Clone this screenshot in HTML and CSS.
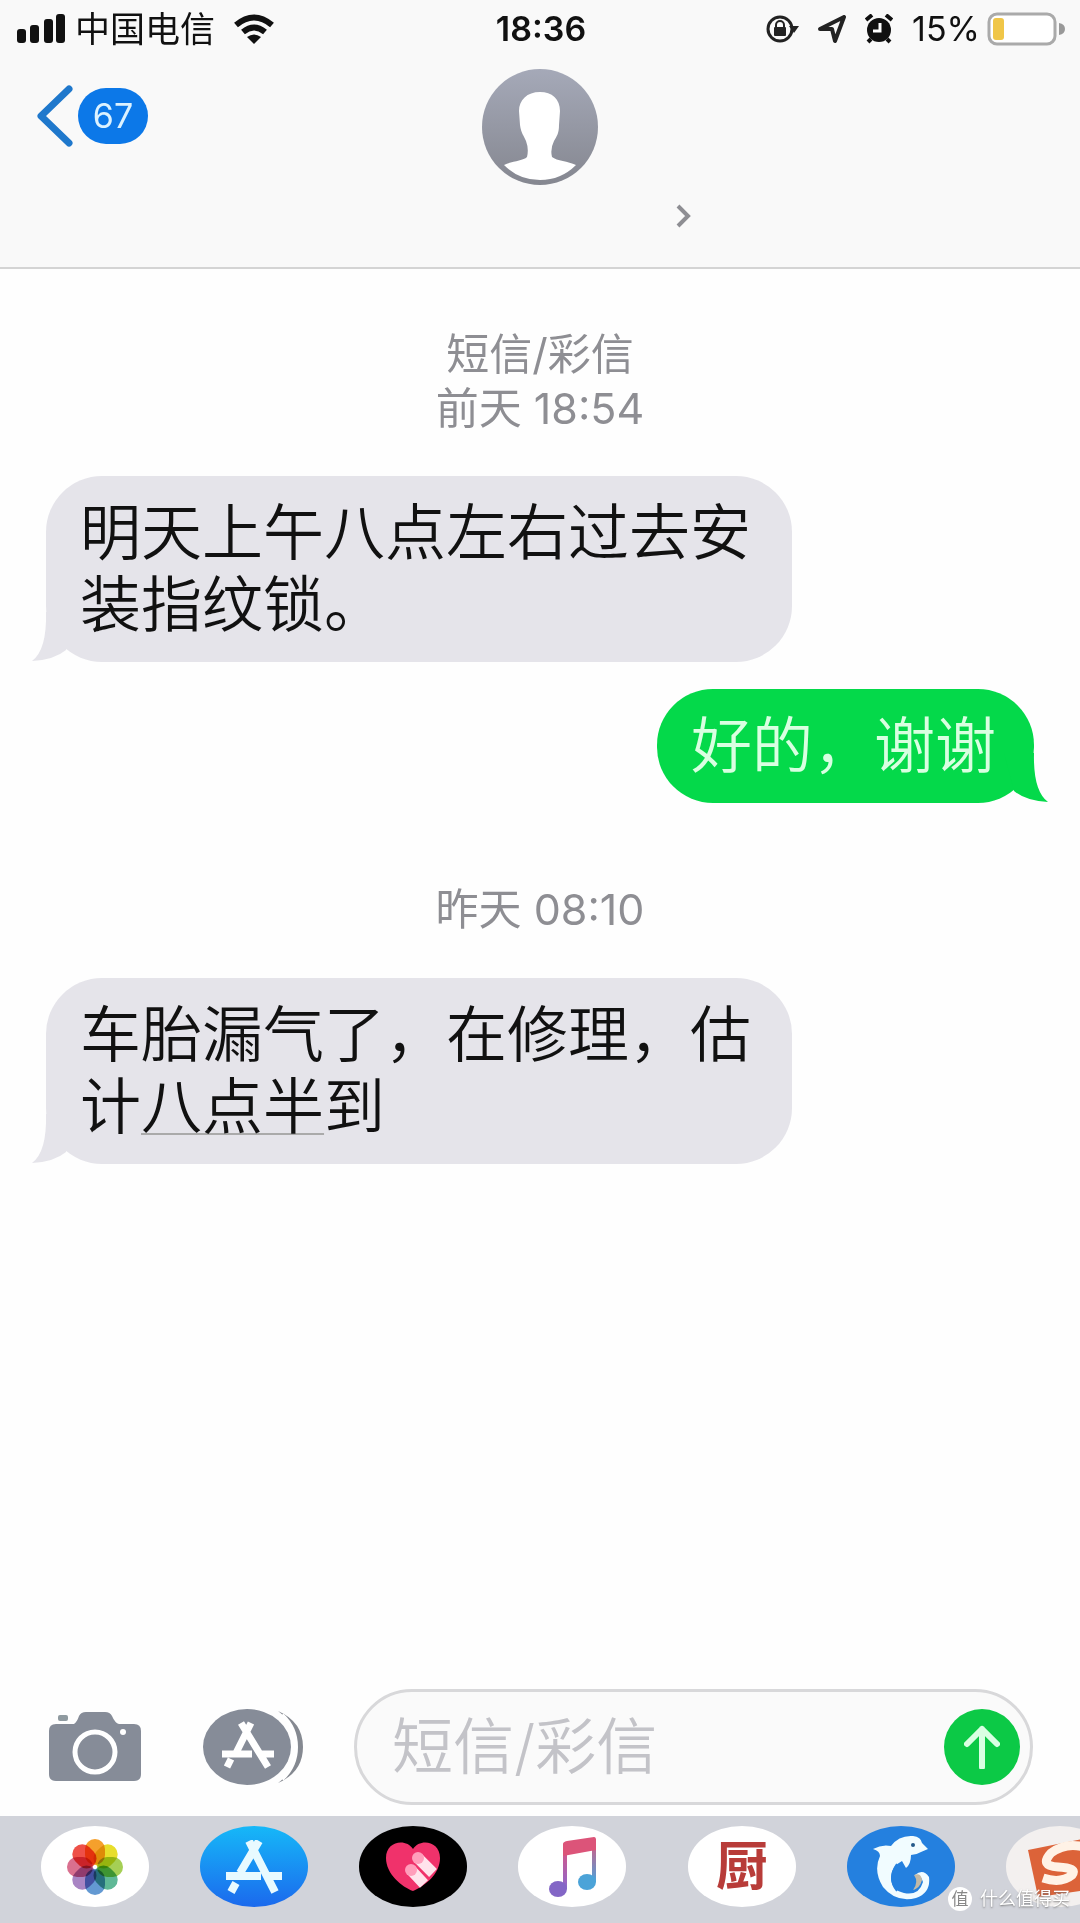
FILE: index.html
```html
<!DOCTYPE html>
<html lang="zh-CN">
<head>
  <meta charset="UTF-8">
  <meta name="viewport" content="width=device-width, initial-scale=1.0">
  <title>短信/彩信</title>
  <link rel="stylesheet" href="styles.css">
</head>
<body>
  <header class="header">
    <div class="status">
      <div class="status-left">
        <svg class="signal" width="50" height="30" viewBox="0 0 50 30">
          <rect x="0" y="15" width="9" height="14" rx="3"/>
          <rect x="13" y="11" width="9" height="18" rx="3"/>
          <rect x="27" y="5" width="9" height="24" rx="3"/>
          <rect x="39" y="0" width="9" height="29" rx="3"/>
        </svg>
        <span class="carrier">中国电信</span>
        <svg class="wifi" width="42" height="30" viewBox="0 0 42 30">
          <path d="M3 11Q21 -4 39 11M10 18Q21 9 32 18" fill="none" stroke="#111" stroke-width="6"/>
          <path d="M14 23Q21 18 28 23L21 30Z" fill="#111"/>
        </svg>
      </div>
      <time class="clock">18:36</time>
      <div class="status-right">
        <svg width="34" height="30" viewBox="0 0 34 30">
          <circle cx="15" cy="15" r="12" fill="none" stroke="#222" stroke-width="3"/>
          <path d="M24 12h10l-5 7z" fill="#222"/>
          <rect x="9" y="13" width="12" height="9" rx="1" fill="#222"/>
          <path d="M11 14v-3a4 4 0 0 1 8 0v3" fill="none" stroke="#222" stroke-width="2"/>
        </svg>
        <svg width="28" height="28" viewBox="0 0 28 28">
          <path d="M2 14L26 2L17 26L14 14Z" fill="none" stroke="#222" stroke-width="4" stroke-linejoin="round"/>
        </svg>
        <svg width="28" height="30" viewBox="0 0 28 30">
          <circle cx="14" cy="16" r="12" fill="#111"/>
          <path d="M1 6L7 1M27 6L21 1M6 25L3 28M22 25L25 28" stroke="#111" stroke-width="4"/>
          <path d="M15 9v8H8" fill="none" stroke="#fff" stroke-width="3"/>
        </svg>
        <span class="percent">15%</span>
        <svg width="78" height="34" viewBox="0 0 78 34">
          <rect x="2" y="2" width="66" height="30" rx="8" fill="#fff" stroke="#aaa" stroke-width="3"/>
          <rect x="6" y="6" width="11" height="22" rx="3" fill="#f0c648"/>
          <path d="M72 11q6 1 6 6t-6 6z" fill="#999"/>
        </svg>
      </div>
    </div>
    <nav class="nav">
      <a class="back" href="#" aria-label="返回">
        <svg width="38" height="62" viewBox="0 0 38 62">
          <path d="M34 4L6 31L34 58" fill="none" stroke="#1f78cc" stroke-width="7" stroke-linecap="round" stroke-linejoin="round"/>
        </svg>
        <span class="unread">67</span>
      </a>
      <a class="contact" href="#" aria-label="联系人">
        <svg class="avatar" width="118" height="118" viewBox="0 0 118 118">
          <defs>
            <linearGradient id="avatar-fill" x1="0" y1="0" x2="0" y2="1">
              <stop offset="0" stop-color="#a5a9b8"/>
              <stop offset="1" stop-color="#858790"/>
            </linearGradient>
          </defs>
          <circle cx="59" cy="59" r="58" fill="url(#avatar-fill)"/>
          <path d="M59 24C46 24 38 32 38 43L39 57C40 65 43 68 45 73Q48 81 46 89C42 93 31 93 23 97Q38 112 59 112T95 97C87 93 76 93 71 89Q69 81 73 73C76 68 78 65 78 57L79 43C79 31 71 24 59 24Z" fill="#fff"/>
        </svg>
        <svg class="detail" width="16" height="24" viewBox="0 0 16 24">
          <path d="M3 2L13 12L3 22" fill="none" stroke="#8e8e93" stroke-width="4"/>
        </svg>
      </a>
    </nav>
  </header>

  <main class="messages">
    <p class="stamp">短信/彩信<br>前天 <time>18:54</time></p>
    <div class="bubble received">
      明天上午八点左右过去安装指纹锁。
      <svg class="tail" width="44" height="50" viewBox="0 0 44 50">
        <path d="M14 0Q15 38 0 49Q22 48 34 38L44 0Z"/>
      </svg>
    </div>
    <div class="bubble sent">
      好的，谢谢
      <svg class="tail" width="44" height="50" viewBox="0 0 44 50">
        <path d="M30 0Q29 38 44 49Q22 48 10 38L0 0Z"/>
      </svg>
    </div>
    <p class="stamp later">昨天 <time>08:10</time></p>
    <div class="bubble received">
      车胎漏气了，在修理，估计<a class="when" href="#">八点半</a>到
      <svg class="tail" width="44" height="50" viewBox="0 0 44 50">
        <path d="M14 0Q15 38 0 49Q22 48 34 38L44 0Z"/>
      </svg>
    </div>
  </main>

  <form class="compose">
    <button class="tool" type="button" aria-label="相机">
      <svg width="94" height="72" viewBox="0 0 94 72">
        <path d="M8 13H26Q29 11 31 5Q33 1 38 1H57Q62 1 64 5Q67 12 71 13H86Q93 13 93 20V63Q93 70 86 70H8Q1 70 1 63V20Q1 13 8 13Z" fill="#868c98"/>
        <rect x="10" y="4" width="10" height="6" rx="2" fill="#8f9aa0"/>
        <circle cx="47" cy="41" r="20" fill="none" stroke="#fff" stroke-width="5"/>
        <circle cx="75" cy="21" r="3" fill="#fff"/>
      </svg>
    </button>
    <button class="tool" type="button" aria-label="应用">
      <svg width="102" height="78" viewBox="0 0 102 78">
        <path d="M76 3Q101 14 101 39T76 75Q94 62 94 39T76 3Z" fill="#858991"/>
        <ellipse cx="45" cy="39" rx="44" ry="38" fill="#868c98"/>
        <path d="M80 7Q94 20 94 39T80 71" fill="none" stroke="#fff" stroke-width="4"/>
        <g fill="none" stroke="#fff" stroke-width="7">
          <path d="M49 15L34 45M39 15L66 59M20 46H50M58 46H72M29 51L25 59"/>
        </g>
      </svg>
    </button>
    <div class="field">
      <input class="text" type="text" placeholder="短信/彩信" aria-label="短信/彩信">
      <button class="send" type="button" aria-label="发送">
        <svg width="36" height="44" viewBox="0 0 36 44">
          <path d="M18 42V4M3 19L18 4L33 19" fill="none" stroke="#d9ffe3" stroke-width="6" stroke-linecap="round" stroke-linejoin="round"/>
        </svg>
      </button>
    </div>
  </form>

  <footer class="apps">
    <button class="app" type="button" aria-label="照片">
      <svg width="58" height="58" viewBox="-29 -29 58 58">
        <g class="petals">
          <rect x="-10" y="-28" width="20" height="26" rx="10" fill="#f5a02c"/>
          <rect x="-10" y="-28" width="20" height="26" rx="10" fill="#e8de2c" transform="rotate(45)"/>
          <rect x="-10" y="-28" width="20" height="26" rx="10" fill="#a5cf55" transform="rotate(90)"/>
          <rect x="-10" y="-28" width="20" height="26" rx="10" fill="#5fb896" transform="rotate(135)"/>
          <rect x="-10" y="-28" width="20" height="26" rx="10" fill="#6399d2" transform="rotate(180)"/>
          <rect x="-10" y="-28" width="20" height="26" rx="10" fill="#a985c4" transform="rotate(225)"/>
          <rect x="-10" y="-28" width="20" height="26" rx="10" fill="#d9708f" transform="rotate(270)"/>
          <rect x="-10" y="-28" width="20" height="26" rx="10" fill="#ee5048" transform="rotate(315)"/>
        </g>
      </svg>
    </button>
    <button class="app store" type="button" aria-label="App Store">
      <svg width="58" height="54" viewBox="0 0 58 54">
        <path d="M34 1L15 33M24 1L50 52M1 36H36M44 36H57M11 43L6 52" fill="none" stroke="#e8faff" stroke-width="8"/>
      </svg>
    </button>
    <button class="app touch" type="button" aria-label="Digital Touch">
      <svg width="58" height="54" viewBox="0 0 58 54">
        <path d="M29 9C22 -2 2 1 2 18C2 34 18 47 29 51C41 46 56 34 56 18C56 1 36 -2 29 9Z" fill="#f0326b"/>
        <path d="M34 18L49 33M27 30L40 44" stroke="#ffe3ec" stroke-width="11"/>
        <circle cx="34" cy="18" r="6" fill="#ff9ebb"/>
        <circle cx="27" cy="30" r="6" fill="#ff9ebb"/>
      </svg>
    </button>
    <button class="app" type="button" aria-label="音乐">
      <svg width="50" height="62" viewBox="0 0 50 62">
        <defs>
          <linearGradient id="stem-left" x1="0" y1="0" x2="0" y2="1">
            <stop offset="0" stop-color="#e2557c"/>
            <stop offset="1" stop-color="#8a68cf"/>
          </linearGradient>
          <linearGradient id="stem-right" x1="0" y1="0" x2="0" y2="1">
            <stop offset="0" stop-color="#e2557c"/>
            <stop offset="1" stop-color="#4ba3db"/>
          </linearGradient>
        </defs>
        <path d="M16 8H20V53H16Z" fill="url(#stem-left)"/>
        <path d="M45 3H49V46H45Z" fill="url(#stem-right)"/>
        <path d="M16 8Q16 6 20 5L47 1Q49 1 49 4V14L16 20Z" fill="#dc5479"/>
        <ellipse cx="11" cy="53" rx="9" ry="8" fill="#8366c6"/>
        <ellipse cx="40" cy="46" rx="9" ry="8" fill="#4ba3d8"/>
      </svg>
    </button>
    <span class="divider"></span>
    <button class="app kitchen" type="button">厨</button>
    <button class="app travel" type="button" aria-label="旅行">
      <svg width="58" height="66" viewBox="0 0 58 66">
        <path d="M1 15Q10 10 19 12Q27 1 41 2Q49 3 50 9L56 15L49 18Q44 21 39 21Q39 30 34 34L30 27Q20 32 19 43Q19 56 32 59Q47 62 51 48Q50 42 43 41Q51 34 57 43Q59 59 44 64Q24 69 11 53Q1 37 8 22Q8 17 1 15Z" fill="#f1fcff"/>
        <path d="M25 30Q15 44 25 57" fill="none" stroke="#2480df" stroke-width="2"/>
        <path d="M42 41Q49 38 50 46Q48 54 41 56Q47 48 42 41Z" fill="#c2b9a6"/>
        <circle cx="41" cy="11" r="2" fill="#24598a"/>
      </svg>
    </button>
    <button class="app sogou" type="button" aria-label="搜狗">
      <svg width="76" height="62" viewBox="0 0 76 62">
        <path d="M1 14L66 1L75 52L11 61Z" fill="#dc6339"/>
        <path d="M60 12Q40 5 24 17Q12 30 31 31Q51 32 45 39Q34 48 16 42" fill="none" stroke="#fff2e6" stroke-width="9"/>
      </svg>
    </button>
    <div class="watermark">
      <span class="seal">值</span>
      <span>什么值得买</span>
    </div>
  </footer>
</body>
</html>
```

FILE: styles.css
```css
* {
  box-sizing: border-box;
}

body {
  margin: 0;
  min-height: 100vh;
  display: flex;
  flex-direction: column;
  background: #fefefe;
  color: #111;
  font-family: Inter, "Noto Sans CJK SC", sans-serif;
  overflow-x: hidden;
}

button {
  border: 0;
  padding: 0;
  background: none;
  font-family: inherit;
}

svg {
  display: block;
  flex: none;
}

/* status bar and contact */
.header {
  background: #f9f9f9;
  border-bottom: 2px solid #d4d4d4;
}

.status {
  display: grid;
  grid-template-columns: 1fr auto 1fr;
  align-items: center;
  height: 58px;
  padding: 0 15px 0 17px;
  line-height: 40px;
}

.status-left,
.status-right {
  display: flex;
  align-items: center;
}

.status-right {
  justify-content: flex-end;
  gap: 19px;
}

.signal {
  fill: #111;
}

.carrier {
  margin: 0 18px 0 8px;
  font-size: 35px;
}

.clock {
  font-size: 34px;
  font-weight: 600;
}

.percent {
  margin-right: -12px;
  font-size: 34px;
}

.nav {
  display: grid;
  grid-template-columns: 1fr auto 1fr;
  align-items: start;
  padding: 10px 35px 39px;
}

.back {
  display: flex;
  align-items: center;
  gap: 5px;
  padding-top: 17px;
  text-decoration: none;
}

.unread {
  width: 70px;
  border-radius: 28px;
  background: #0c78e8;
  color: #dcf2ff;
  font-size: 34px;
  line-height: 56px;
  text-align: center;
}

.contact {
  display: flex;
  flex-direction: column;
  align-items: center;
  width: 302px;
  gap: 18px;
}

.detail {
  align-self: flex-end;
}

/* conversation */
.messages {
  flex: 1;
  display: flex;
  flex-direction: column;
  align-items: flex-start;
  padding: 58px 46px 40px;
}

.stamp {
  align-self: center;
  margin: 0 0 41px;
  color: #8e8e93;
  font-size: 43px;
  line-height: 54px;
  text-align: center;
}

.later {
  margin: 79px 0 42px;
}

.bubble {
  position: relative;
  max-width: 746px;
  padding: 21px 38px 21px 34px;
  border-radius: 56px;
  font-size: 61px;
  font-weight: 350;
  line-height: 72px;
}

.received {
  background: #e5e4ea;
}

.sent {
  align-self: flex-end;
  margin-top: 27px;
  background: #04d94a;
  color: #d9ffe1;
}

.tail {
  position: absolute;
  bottom: 0;
}

.received .tail {
  left: -14px;
  fill: #e5e4ea;
}

.sent .tail {
  right: -14px;
  fill: #04d94a;
}

.when {
  color: inherit;
  text-decoration-color: #aaa;
  text-decoration-thickness: 2px;
  text-underline-offset: 4px;
}

/* message box */
.compose {
  display: flex;
  align-items: center;
  padding: 0 47px 11px 48px;
}

.tool {
  margin-right: 60px;
}

.tool + .tool {
  margin-right: 50px;
}

.field {
  flex: 1;
  display: flex;
  align-items: center;
  min-width: 0;
  height: 116px;
  padding: 0 10px 0 35px;
  border: 3px solid #d8d8da;
  border-radius: 58px;
  background: #fafafa;
}

.text {
  flex: 1;
  min-width: 0;
  height: 90px;
  padding: 0;
  border: 0;
  outline: 0;
  background: none;
  font-family: inherit;
  font-size: 61px;
  font-weight: 350;
}

.text::placeholder {
  color: #c3c3c8;
}

.send {
  display: grid;
  place-items: center;
  width: 76px;
  height: 76px;
  border-radius: 50%;
  background: #0cc946;
}

/* app strip */
.apps {
  position: relative;
  display: flex;
  align-items: center;
  gap: 51px;
  height: 107px;
  padding: 0 0 6px 41px;
  background: #d1d3da;
  overflow: hidden;
}

.app {
  flex: none;
  display: grid;
  place-items: center;
  width: 108px;
  height: 81px;
  border-radius: 54px / 40px;
  background: #fff;
}

.petals rect {
  mix-blend-mode: multiply;
}

.store {
  background: linear-gradient(#16b8f8, #1b69ed);
}

.touch {
  background: #000;
}

.divider {
  width: 4px;
  height: 74px;
  margin: 0 -20px;
  background: #bfc1c9;
}

.kitchen {
  color: #b83c39;
  font-size: 52px;
  font-weight: 700;
  line-height: 60px;
}

.travel {
  background: #2480df;
}

.sogou {
  justify-content: start;
  padding-left: 21px;
  background: #f3f0ef;
}

.watermark {
  position: absolute;
  right: 10px;
  bottom: 12px;
  display: flex;
  align-items: center;
  gap: 8px;
  color: #fff;
  font-size: 18px;
  line-height: 24px;
  text-shadow: 0 1px 2px #777;
}

.seal {
  width: 24px;
  border-radius: 50%;
  background: #fff;
  color: #888;
  font-size: 17px;
  text-align: center;
  text-shadow: none;
}
```
